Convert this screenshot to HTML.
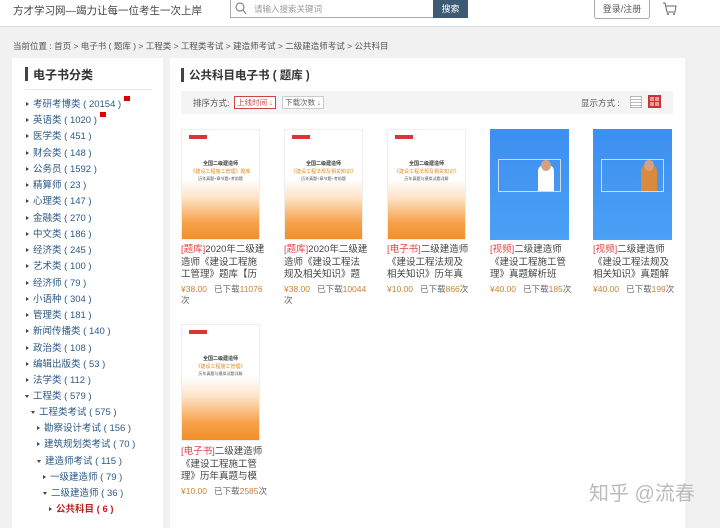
<!DOCTYPE html>
<html><head><meta charset="utf-8"><style>
*{margin:0;padding:0;box-sizing:border-box}
body{width:720px;height:519px;overflow:hidden;background:#f1f1f1;font-family:"Liberation Sans","Noto Sans CJK SC",sans-serif;color:#333;position:relative}
.a{position:absolute;white-space:nowrap}
.hdr{position:absolute;left:0;top:0;width:720px;height:27px;background:#fff;border-bottom:1px solid #ddd}
.panel{position:absolute;background:#fff}
.li{position:absolute;font-size:9.5px;color:#2c5a85;white-space:nowrap}
.li:before{content:"";display:inline-block;border-left:3px solid #444;border-top:2.5px solid transparent;border-bottom:2.5px solid transparent;margin-right:4px;vertical-align:1px}
.li.o:before{border-left:2.5px solid transparent;border-right:2.5px solid transparent;border-top:3px solid #444;border-bottom:0}
.cov{position:absolute;width:79px;height:111px;background:linear-gradient(#fff 0%,#fff 45%,#fde4c8 62%,#f7a14a 85%,#f18e2a 100%);border:1px solid #eee}
.cov .lg{position:absolute;left:7px;top:5px;width:18px;height:4px;background:#d33}
.cov .t1{position:absolute;left:0;right:0;top:30px;text-align:center;font-size:5px;font-weight:bold;color:#333}
.cov .t2{position:absolute;left:0;right:0;top:38px;text-align:center;font-size:5px;color:#e08a1a}
.cov .t3{position:absolute;left:0;right:0;top:46px;text-align:center;font-size:4px;color:#555}
.vc{position:absolute;width:79px;height:111px;background:linear-gradient(#3d8ff0,#4aa0f5);}
.vc .bx{position:absolute;left:8px;top:30px;width:63px;height:33px;border:1px solid #cde}
.vc .p{position:absolute;left:48px;top:36px;width:16px;height:26px;background:#fff;border-radius:6px 6px 0 0}
.vc .hd{position:absolute;left:51px;top:31px;width:10px;height:11px;background:#d9a080;border-radius:50%}
.tt{position:absolute;width:84px;font-size:9.5px;line-height:12.5px;color:#444;white-space:normal;height:38px;overflow:hidden}
.tt b{font-weight:normal;color:#d44}
.pr{position:absolute;font-size:8.5px;color:#666;width:88px;line-height:11px}
.pr i{font-style:normal;color:#c9822e}
.pr u{text-decoration:none;color:#c9822e}
</style></head><body>
<div class="hdr"></div>
<div class="a" style="left:13px;top:3px;font-size:10.5px;color:#444">方才学习网—竭力让每一位考生一次上岸</div>
<div class="a" style="left:230px;top:0;width:204px;height:18px;border:1px solid #aaa;border-top:0;background:#fff"></div>
<svg class="a" style="left:235px;top:2px" width="12" height="13"><circle cx="5" cy="5" r="4" fill="none" stroke="#888" stroke-width="1.2"/><line x1="8" y1="8" x2="11" y2="12" stroke="#888" stroke-width="1.2"/></svg>
<div class="a" style="left:254px;top:3px;font-size:8.5px;color:#999">请输入搜索关键词</div>
<div class="a" style="left:433px;top:0;width:35px;height:18px;background:#3d5a75;color:#fff;font-size:9px;text-align:center;line-height:18px">搜索</div>
<div class="a" style="left:594px;top:0;width:56px;height:19px;border:1px solid #aaa;border-top:0;border-radius:0 0 3px 3px;background:#fff;font-size:9px;color:#555;text-align:center;line-height:18px">登录/注册</div>
<svg class="a" style="left:662px;top:2px" width="15" height="14"><path d="M1 1h2l2 9h8l1-6H4" fill="none" stroke="#666" stroke-width="1"/><circle cx="6" cy="12" r="1" fill="#666"/><circle cx="12" cy="12" r="1" fill="#666"/></svg>
<div class="a" style="left:13px;top:40px;font-size:8.5px;color:#555">当前位置 : 首页 &gt; 电子书 ( 题库 ) &gt; 工程类 &gt; 工程类考试 &gt; 建造师考试 &gt; 二级建造师考试 &gt; 公共科目</div>

<div class="panel" style="left:12px;top:58px;width:151px;height:470px"></div>
<div class="a" style="left:25px;top:67px;width:3px;height:14px;background:#444"></div>
<div class="a" style="left:33px;top:66px;font-size:12px;color:#333;font-weight:bold">电子书分类</div>
<div class="a" style="left:25px;top:89px;width:127px;height:1px;background:#e5e5e5"></div>

<div class="li" style="left:26px;top:96px">考研考博类 ( 20154 ) <span style="display:inline-block;width:6px;height:5px;background:#d00;vertical-align:6px"></span></div>
<div class="li" style="left:26px;top:112px">英语类 ( 1020 ) <span style="display:inline-block;width:6px;height:5px;background:#d00;vertical-align:6px"></span></div>
<div class="li" style="left:26px;top:128px">医学类 ( 451 )</div>
<div class="li" style="left:26px;top:145px">财会类 ( 148 )</div>
<div class="li" style="left:26px;top:161px">公务员 ( 1592 )</div>
<div class="li" style="left:26px;top:177px">精算师 ( 23 )</div>
<div class="li" style="left:26px;top:193px">心理类 ( 147 )</div>
<div class="li" style="left:26px;top:210px">金融类 ( 270 )</div>
<div class="li" style="left:26px;top:226px">中文类 ( 186 )</div>
<div class="li" style="left:26px;top:242px">经济类 ( 245 )</div>
<div class="li" style="left:26px;top:258px">艺术类 ( 100 )</div>
<div class="li" style="left:26px;top:275px">经济师 ( 79 )</div>
<div class="li" style="left:26px;top:291px">小语种 ( 304 )</div>
<div class="li" style="left:26px;top:307px">管理类 ( 181 )</div>
<div class="li" style="left:26px;top:323px">新闻传播类 ( 140 )</div>
<div class="li" style="left:26px;top:340px">政治类 ( 108 )</div>
<div class="li" style="left:26px;top:356px">编辑出版类 ( 53 )</div>
<div class="li" style="left:26px;top:372px">法学类 ( 112 )</div>
<div class="li o" style="left:25px;top:388px">工程类 ( 579 )</div>
<div class="li o" style="left:31px;top:404px">工程类考试 ( 575 )</div>
<div class="li" style="left:37px;top:420px">勘察设计考试 ( 156 )</div>
<div class="li" style="left:37px;top:436px">建筑规划类考试 ( 70 )</div>
<div class="li o" style="left:37px;top:453px">建造师考试 ( 115 )</div>
<div class="li" style="left:43px;top:469px">一级建造师 ( 79 )</div>
<div class="li o" style="left:43px;top:485px">二级建造师 ( 36 )</div>
<div class="li" style="left:49px;top:501px;color:#b22;font-weight:bold">公共科目 ( 6 )</div>

<div class="panel" style="left:170px;top:58px;width:515px;height:470px"></div>
<div class="a" style="left:181px;top:68px;width:3px;height:14px;background:#444"></div>
<div class="a" style="left:189px;top:67px;font-size:11.5px;color:#333;font-weight:bold">公共科目电子书 ( 题库 )</div>
<div class="a" style="left:181px;top:91px;width:492px;height:23px;background:#f4f4f4"></div>
<div class="a" style="left:193px;top:97px;font-size:8.5px;color:#555">排序方式:</div>
<div class="a" style="left:234px;top:96px;width:42px;height:13px;border:1px solid #c44;background:#fff;font-size:7.5px;color:#c44;line-height:11px;text-align:center">上线时间 ↓</div>
<div class="a" style="left:282px;top:96px;width:42px;height:13px;border:1px solid #ccc;background:#fff;font-size:7.5px;color:#666;line-height:11px;text-align:center">下载次数 ↓</div>
<div class="a" style="left:581px;top:97px;font-size:8.5px;color:#555">显示方式 :</div>
<div class="a" style="left:630px;top:96px;width:12px;height:12px;border:1px solid #bbb;background:repeating-linear-gradient(#fff 0 2px,#bbb 2px 3px)"></div>
<div class="a" style="left:648px;top:95px;width:13px;height:13px;background:#c33;border:2px solid #c33"><div style="width:9px;height:9px;background:repeating-linear-gradient(90deg,transparent 0 4px,#c33 4px 5px),repeating-linear-gradient(transparent 0 4px,#c33 4px 5px),#e99"></div></div>

<div class="cov" style="left:181px;top:129px"><div class="lg"></div><div class="t1">全国二级建造师</div><div class="t2">《建设工程施工管理》题库</div><div class="t3">历年真题+章节题+考前题</div></div>
<div class="cov" style="left:284px;top:129px"><div class="lg"></div><div class="t1">全国二级建造师</div><div class="t2">《建设工程法规及相关知识》</div><div class="t3">历年真题+章节题+考前题</div></div>
<div class="cov" style="left:387px;top:129px"><div class="lg"></div><div class="t1">全国二级建造师</div><div class="t2">《建设工程法规及相关知识》</div><div class="t3">历年真题与模拟试题详解</div></div>
<div class="vc" style="left:490px;top:129px"><div class="bx"></div><div class="p"></div><div class="hd"></div></div>
<div class="vc" style="left:593px;top:129px"><div class="bx"></div><div class="p" style="background:#d98a3a"></div><div class="hd"></div></div>
<div class="cov" style="left:181px;top:324px;height:117px"><div class="lg"></div><div class="t1">全国二级建造师</div><div class="t2">《建设工程施工管理》</div><div class="t3">历年真题与模拟试题详解</div></div>

<div class="tt" style="left:181px;top:244px"><b>[题库]</b>2020年二级建造师《建设工程施工管理》题库【历年真题</div>
<div class="pr" style="left:181px;top:284px"><i>¥38.00</i>&nbsp;&nbsp; 已下载<u>11076</u><br>次</div>
<div class="tt" style="left:284px;top:244px"><b>[题库]</b>2020年二级建造师《建设工程法规及相关知识》题库</div>
<div class="pr" style="left:284px;top:284px"><i>¥38.00</i>&nbsp;&nbsp; 已下载<u>10044</u><br>次</div>
<div class="tt" style="left:387px;top:244px"><b>[电子书]</b>二级建造师《建设工程法规及相关知识》历年真题与</div>
<div class="pr" style="left:387px;top:284px"><i>¥10.00</i>&nbsp;&nbsp; 已下载<u>866</u>次</div>
<div class="tt" style="left:490px;top:244px"><b>[视频]</b>二级建造师《建设工程施工管理》真题解析班（网</div>
<div class="pr" style="left:490px;top:284px"><i>¥40.00</i>&nbsp;&nbsp; 已下载<u>185</u>次</div>
<div class="tt" style="left:593px;top:244px"><b>[视频]</b>二级建造师《建设工程法规及相关知识》真题解析班</div>
<div class="pr" style="left:593px;top:284px"><i>¥40.00</i>&nbsp;&nbsp; 已下载<u>199</u>次</div>
<div class="tt" style="left:181px;top:446px"><b>[电子书]</b>二级建造师《建设工程施工管理》历年真题与模拟</div>
<div class="pr" style="left:181px;top:486px"><i>¥10.00</i>&nbsp;&nbsp; 已下载<u>2585</u>次</div>

<div class="a" style="left:589px;top:477px;font-size:20px;color:#bbb">知乎 @流春</div>
</body></html>
